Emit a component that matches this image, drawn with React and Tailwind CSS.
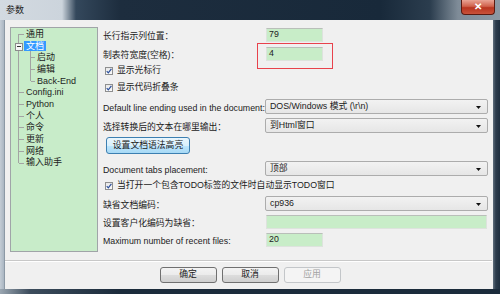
import React from 'react';

const FONT = "font-['Liberation_Sans','Noto_Sans_CJK_SC',sans-serif]";

const treeRows = [
  { label: '通用', level: 0 },
  { label: '文档', level: 0, selected: true, expanded: true },
  { label: '启动', level: 1 },
  { label: '编辑', level: 1 },
  { label: 'Back-End', level: 1 },
  { label: 'Config.ini', level: 0 },
  { label: 'Python', level: 0 },
  { label: '个人', level: 0 },
  { label: '命令', level: 0 },
  { label: '更新', level: 0 },
  { label: '网络', level: 0 },
  { label: '输入助手', level: 0 },
];

const ROW_H = 11.7;
const center = (i) => 5.85 + ROW_H * i;

const TreeLines = () => (
  <svg className="absolute left-0 top-0" width="86" height="223" shapeRendering="crispEdges">
    <g stroke="#a3a3a3" strokeWidth="1">
      <line x1="7.5" y1={center(0)} x2="7.5" y2={center(11)} />
      {treeRows.map((r, i) =>
        r.level === 0 && !r.expanded ? (
          <line key={i} x1="7.5" y1={Math.round(center(i)) + 0.5} x2="13" y2={Math.round(center(i)) + 0.5} />
        ) : null
      )}
      <line x1="19.5" y1={center(1) + 5} x2="19.5" y2={center(4)} />
      {[2, 3, 4].map((i) => (
        <line key={i} x1="19.5" y1={Math.round(center(i)) + 0.5} x2="24" y2={Math.round(center(i)) + 0.5} />
      ))}
    </g>
    <rect x="4.5" y={Math.round(center(1)) - 3 + 0.5} width="7" height="7" fill="#f6f6f6" stroke="#8c8c8c" />
    <line x1="6" y1={Math.round(center(1)) + 0.5} x2="10" y2={Math.round(center(1)) + 0.5} stroke="#333" />
  </svg>
);

const Tree = () => (
  <div className="relative w-[88px] h-[225px] shrink-0 border border-[#a0a4a8] bg-[#c8ecc9] text-[9px] text-[#1c1c1c]">
    <TreeLines />
    <div className="relative flex flex-col">
      {treeRows.map((r) => (
        <div key={r.label} className={`h-[11.7px] flex items-center ${r.level === 0 ? 'pl-[13px]' : 'pl-[24px]'}`}>
          <span className={`px-[2px] leading-[10px] ${r.selected ? 'bg-[#3399ff] text-white' : ''}`}>{r.label}</span>
        </div>
      ))}
    </div>
  </div>
);

const Label = ({ children }) => (
  <div className="w-[162px] shrink-0 mt-[4px] whitespace-nowrap">{children}</div>
);

const TextInput = ({ value, wide }) => (
  <div
    className={`${wide ? 'w-[221px]' : 'w-[57px]'} h-[14px] ml-[1px] flex items-center pl-[2px] bg-[#c8edc8] border border-[#dde3dd] border-t-[#b9bfb9] text-[#222]`}
  >
    {value}
  </div>
);

const Select = ({ value }) => (
  <div className="relative w-[223px] h-[15px] flex items-center pl-[4px] rounded-[2px] border border-[#acacac] bg-[linear-gradient(#f2f2f2,#e6e6e6)] text-[#1b1b1b]">
    <span className="whitespace-nowrap">{value}</span>
    <svg className="absolute right-[6px] top-[6px]" width="5" height="3" viewBox="0 0 5 3">
      <path d="M0 0 H5 L2.5 3 Z" fill="#111" />
    </svg>
  </div>
);

const Checkbox = ({ label }) => (
  <div className="h-[10px] flex items-center pl-[2px] gap-[4px]">
    <div className="w-[8px] h-[8px] border border-[#8e8f8f] bg-[linear-gradient(#e8e8e8,#fafafa)] flex items-center justify-center">
      <svg width="6" height="6" viewBox="0 0 6 6">
        <path d="M0.7 3.2 L2.3 4.9 L5.4 0.8" stroke="#2b4f9c" strokeWidth="1.2" fill="none" />
      </svg>
    </div>
    <span className="whitespace-nowrap">{label}</span>
  </div>
);

const Button = ({ children, disabled }) => (
  <div
    className={`w-[57px] h-[16px] flex items-center justify-center rounded-[3px] border ${
      disabled
        ? 'border-[#c3c6c9] bg-[#f4f4f4] text-[#a2a2a2]'
        : 'border-[#707070] bg-[linear-gradient(#f3f3f3_0%,#ebebeb_50%,#dddddd_51%,#cfcfcf_100%)] text-[#1b1b1b]'
    }`}
  >
    {children}
  </div>
);

export default function App() {
  return (
    <div className={`w-[500px] h-[294px] flex flex-col overflow-hidden bg-[#1c2c3c] text-[8.8px] text-[#1b1b1b] ${FONT}`}>
      {/* title bar */}
      <div className="relative h-[20px] shrink-0 flex items-center pl-[6px] bg-[linear-gradient(to_right,#d3dae1_0px,#ccd4dc_62px,#34485c_76px,#1d2d3e_120px,#18293a_380px,#2b3d4e_430px,#7f8c98_458px,#8c98a3_500px)]">
        <span className="text-[9px] text-[#1e1e1e] mt-[1px]">参数</span>
        <div className="absolute right-[5px] top-0 w-[34px] h-[15px] flex items-center justify-center rounded-b-[4px] border border-t-0 border-[#5a1a10] bg-[linear-gradient(#e9a494_0%,#d0624c_45%,#b8351f_55%,#c9523a_100%)]">
          <span className="text-white text-[10px] font-bold leading-none">✕</span>
        </div>
      </div>

      <div className="flex h-[269px] shrink-0">
        <div className="w-[5px] bg-[linear-gradient(to_right,#c3ccd5,#aab6c2_80%,#6d7b88)]" />
        <div className="w-[488px] bg-[#f0f0f0] flex flex-col">
          <div className="flex pl-[5px] pt-[7px]">
            <Tree />
            <div className="ml-[5px] w-[385px] flex flex-col">
              <div className="flex items-center h-[14px] mt-[1px]">
                <Label>长行指示列位置：</Label>
                <TextInput value="79" />
              </div>
              <div className="flex items-center h-[14px] mt-[5px]">
                <Label>制表符宽度(空格)：</Label>
                <div className="relative">
                  <TextInput value="4" />
                  <div className="absolute left-[-8px] top-[-4px] w-[76px] h-[26px] border border-[#e8424c]" />
                </div>
              </div>
              <div className="mt-[5px]">
                <Checkbox label="显示光标行" />
              </div>
              <div className="mt-[7px]">
                <Checkbox label="显示代码折叠条" />
              </div>
              <div className="flex items-center h-[15px] mt-[6px]">
                <Label>Default line ending used in the document:</Label>
                <Select value={'DOS/Windows 模式 (\\r\\n)'} />
              </div>
              <div className="flex items-center h-[15px] mt-[4px]">
                <Label>选择转换后的文本在哪里输出：</Label>
                <Select value="到Html窗口" />
              </div>
              <div className="mt-[4px] ml-[3px] w-[84px] h-[17px] flex items-center justify-center rounded-[3px] border border-[#3c7fb1] bg-[linear-gradient(#eaf6fd_0%,#d9f0fc_50%,#bee6fd_51%,#a7d9f5_100%)]">
                设置文档语法高亮
              </div>
              <div className="flex items-center h-[15px] mt-[7px]">
                <Label>Document tabs placement:</Label>
                <Select value="顶部" />
              </div>
              <div className="mt-[5px]">
                <Checkbox label="当打开一个包含TODO标签的文件时自动显示TODO窗口" />
              </div>
              <div className="flex items-center h-[15px] mt-[5px]">
                <Label>缺省文档编码：</Label>
                <Select value="cp936" />
              </div>
              <div className="flex items-center h-[14px] mt-[4px]">
                <Label>设置客户化编码为缺省：</Label>
                <TextInput value="" wide />
              </div>
              <div className="flex items-center h-[14px] mt-[4px]">
                <Label>Maximum number of recent files:</Label>
                <TextInput value="20" />
              </div>
            </div>
          </div>

          <div className="mt-[8px] mr-[1px] h-px bg-[#c8c8c8] border-b border-white box-content" />

          <div className="mt-[5px] flex justify-center gap-[5px] pl-[2px]">
            <Button>确定</Button>
            <Button>取消</Button>
            <Button disabled>应用</Button>
          </div>
        </div>
        <div className="flex-1 bg-[linear-gradient(to_right,#5f6e7c,#2c3c4c_40%,#1e2e3e)]" />
      </div>

      <div className="flex-1 bg-[linear-gradient(to_right,#9aa6b1_0px,#3c4c5c_30px,#1b2b3b_120px,#1b2b3b_100%)]" />
    </div>
  );
}
